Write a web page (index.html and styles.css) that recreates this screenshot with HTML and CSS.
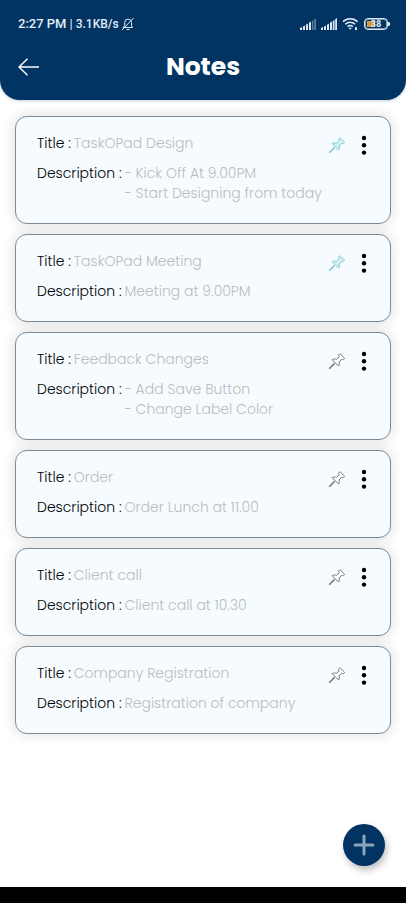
FILE: index.html
```html
<!DOCTYPE html>
<html lang="en">
<head>
<meta charset="utf-8">
<meta name="viewport" content="width=device-width, initial-scale=1">
<title>Notes</title>
<link rel="stylesheet" href="styles.css">
</head>
<body>
<svg class="defs" aria-hidden="true">
  <symbol id="pin" viewBox="0 0 18 18">
    <path stroke-width="1.500" d="M1.200 16.800 6.600 11.400"/>
    <path d="M4.200 7.600c1.500-.8 3-.7 4.200-.3L11.200 4.800c-.7-.9-.6-1.900.1-2.600q.6-.6 1.200 0l3.700 3.600q.6.600 0 1.200c-.7.7-1.700.8-2.600.2L11 10c.5 1.400.4 2.800-.4 4.100z"/>
  </symbol>
  <symbol id="dots" viewBox="0 0 6 20">
    <circle cx="3" cy="3" r="2.200"/><circle cx="3" cy="10.300" r="2.200"/><circle cx="3" cy="17.600" r="2.200"/>
  </symbol>
  <symbol id="signal" viewBox="0 0 16 12">
    <path d="M0 12v-2l2-1v3zM3 12V8.500l2-1V12zM6 12V6.700l2-1.200V12zM9 12V4.800l2-1.300V12z"/>
  </symbol>
</svg>
<header class="header">
  <div class="status">
    <span class="clock">2:27 PM</span><span class="divider">|</span><span class="speed">3.1KB/s</span>
    <svg class="bell" viewBox="0 0 14 14" aria-hidden="true"><path d="M2 10.500h9.500l-1-1.700V5.500a3.400 3.400 0 0 0-6.800 0v3.300zM5.500 12.500h3M1 13 12.500 1"/></svg>
    <div class="indicators">
      <svg class="signal" viewBox="0 0 16 12" aria-hidden="true"><use href="#signal"/><path class="dim" d="M12 12V3l1.500-1v10zM14.200 12V1.500L16 .5V12z"/></svg>
      <svg class="signal" viewBox="0 0 16 12" aria-hidden="true"><use href="#signal"/><path d="M11.800 12V3l1.700-1v10zM14.200 12V1.300L16 0v12z"/></svg>
      <svg class="wifi" viewBox="0 0 17 14" aria-hidden="true"><path class="arc" d="M1 4.800c4-4.100 10.500-4.100 14.500 0M3.300 7.300c2.800-2.800 7-2.800 9.800 0M5.600 9.600c1.500-1.500 3.700-1.500 5.200 0"/><path d="m8.200 12.800-1.600-1.700c.9-.8 2.300-.8 3.200 0zM13 10.200h2v2.800h-2z"/></svg>
      <div class="battery"><span class="charge"></span><span class="level">38</span></div>
    </div>
  </div>
  <div class="appbar">
    <button class="back" type="button" aria-label="Back"><svg viewBox="0 0 22 18" aria-hidden="true"><path d="M21 9H1M9.500 .8 1 9l8.500 8.200"/></svg></button>
    <h1>Notes</h1>
  </div>
</header>
<main class="notes">
  <article class="note">
    <dl><div class="row"><dt>Title :</dt><dd>TaskOPad Design</dd></div><div class="row"><dt>Description :</dt><dd>- Kick Off At 9.00PM<br>- Start Designing from today</dd></div></dl>
    <div class="actions"><button class="pin pinned" type="button" aria-label="Unpin"><svg viewBox="0 0 18 18"><use href="#pin"/></svg></button><button class="more" type="button" aria-label="More"><svg viewBox="0 0 6 20"><use href="#dots"/></svg></button></div>
  </article>
  <article class="note">
    <dl><div class="row"><dt>Title :</dt><dd>TaskOPad Meeting</dd></div><div class="row"><dt>Description :</dt><dd>Meeting at 9.00PM</dd></div></dl>
    <div class="actions"><button class="pin pinned" type="button" aria-label="Unpin"><svg viewBox="0 0 18 18"><use href="#pin"/></svg></button><button class="more" type="button" aria-label="More"><svg viewBox="0 0 6 20"><use href="#dots"/></svg></button></div>
  </article>
  <article class="note">
    <dl><div class="row"><dt>Title :</dt><dd>Feedback Changes</dd></div><div class="row"><dt>Description :</dt><dd>- Add Save Button<br>- Change Label Color</dd></div></dl>
    <div class="actions"><button class="pin" type="button" aria-label="Pin"><svg viewBox="0 0 18 18"><use href="#pin"/></svg></button><button class="more" type="button" aria-label="More"><svg viewBox="0 0 6 20"><use href="#dots"/></svg></button></div>
  </article>
  <article class="note">
    <dl><div class="row"><dt>Title :</dt><dd>Order</dd></div><div class="row"><dt>Description :</dt><dd>Order Lunch at 11.00</dd></div></dl>
    <div class="actions"><button class="pin" type="button" aria-label="Pin"><svg viewBox="0 0 18 18"><use href="#pin"/></svg></button><button class="more" type="button" aria-label="More"><svg viewBox="0 0 6 20"><use href="#dots"/></svg></button></div>
  </article>
  <article class="note">
    <dl><div class="row"><dt>Title :</dt><dd>Client call</dd></div><div class="row"><dt>Description :</dt><dd>Client call at 10.30</dd></div></dl>
    <div class="actions"><button class="pin" type="button" aria-label="Pin"><svg viewBox="0 0 18 18"><use href="#pin"/></svg></button><button class="more" type="button" aria-label="More"><svg viewBox="0 0 6 20"><use href="#dots"/></svg></button></div>
  </article>
  <article class="note">
    <dl><div class="row"><dt>Title :</dt><dd>Company Registration</dd></div><div class="row"><dt>Description :</dt><dd>Registration of company</dd></div></dl>
    <div class="actions"><button class="pin" type="button" aria-label="Pin"><svg viewBox="0 0 18 18"><use href="#pin"/></svg></button><button class="more" type="button" aria-label="More"><svg viewBox="0 0 6 20"><use href="#dots"/></svg></button></div>
  </article>
</main>
<button class="add" type="button" aria-label="Add note"><svg viewBox="0 0 22 22" aria-hidden="true"><path d="M11 2v18M2 11h18"/></svg></button>
<footer class="navbar"></footer>
</body>
</html>
```
FILE: styles.css
```css
* {
  box-sizing: border-box;
}

body {
  margin: 0;
  min-height: 100vh;
  display: flex;
  flex-direction: column;
  background: #fff;
  color: #000;
  font-family: Poppins, Inter, "Liberation Sans", sans-serif;
  font-size: 14px;
  font-weight: 300;
  line-height: 20px;
}

.defs {
  display: none;
}

svg {
  display: block;
}

button {
  padding: 0;
  border: 0;
  background: none;
  cursor: pointer;
}

.header {
  padding: 14px 18px 15px;
  border-radius: 0 0 20px 20px;
  background: #013462;
  color: #fff;
  box-shadow: 0 1px 3px #01346240;
}

.status {
  display: flex;
  align-items: center;
  height: 20px;
  color: #e3edf7;
  font-family: Roboto, "Liberation Sans", sans-serif;
  font-size: 13px;
  font-weight: 500;
}

.divider {
  margin: 0 3px;
  font-weight: 400;
}

.speed {
  font-size: 12px;
}

.bell {
  width: 14px;
  height: 14px;
  margin-left: 2px;
  fill: none;
  stroke: #e3edf7;
}

.indicators {
  display: flex;
  align-items: center;
  gap: 5px;
  margin-left: auto;
}

.signal {
  width: 16px;
  height: 12px;
  fill: #dce8f3;
}

.dim {
  opacity: 0.4;
}

.wifi {
  width: 17px;
  height: 14px;
  fill: #e3edf7;
}

.arc {
  fill: none;
  stroke: #e3edf7;
  stroke-width: 1.5;
}

.battery {
  position: relative;
  display: flex;
  align-items: center;
  justify-content: center;
  width: 24px;
  height: 12px;
  border: 1px solid #dce8f3;
  border-radius: 4px;
  box-shadow: inset 0 0 0 1px #7f9ab2;
}

.battery::after {
  content: "";
  position: absolute;
  right: -3px;
  top: 3px;
  width: 2px;
  height: 4px;
  border-radius: 1px;
  background: #dce8f3;
}

.charge {
  position: absolute;
  left: 2px;
  top: 2px;
  width: 8px;
  height: 6px;
  background: #c79a3c;
}

.level {
  position: relative;
  font-size: 9px;
  font-weight: 700;
  line-height: 10px;
}

.appbar {
  display: grid;
  grid-template-columns: 22px 1fr 22px;
  align-items: center;
  margin-top: 15px;
}

.back svg {
  width: 22px;
  height: 18px;
  fill: none;
  stroke: #fff;
  stroke-width: 1.4;
}

h1 {
  margin: 0;
  font-size: 25px;
  line-height: 36px;
  font-weight: 700;
  text-align: center;
}

.notes {
  display: flex;
  flex-direction: column;
  gap: 10px;
  padding: 16px 15px;
}

.note {
  display: flex;
  justify-content: space-between;
  align-items: flex-start;
  padding: 16px 21px 20px;
  border: 1px solid #7b8b98;
  border-radius: 12px;
  background: #f6fbff;
  box-shadow: 0 0 12px 2px #0000001c;
}

dl {
  display: flex;
  flex-direction: column;
  gap: 10px;
  margin: 0;
}

.row {
  display: flex;
  gap: 3px;
}

dt {
  flex: none;
}

dd {
  margin: 0;
  color: #b9bdc0;
}

.actions {
  display: flex;
  align-items: center;
  gap: 15px;
  padding-top: 2px;
}

.pin svg {
  width: 18px;
  height: 18px;
  fill: #fff;
  stroke: #74787b;
}

.pin.pinned svg {
  stroke: #82c5d1;
  fill: #d8f3f8;
}

.more svg {
  width: 6px;
  height: 20px;
  fill: #000;
}

.more {
  margin-right: 2px;
}

.add {
  position: fixed;
  right: 21px;
  bottom: 37px;
  display: grid;
  place-items: center;
  width: 42px;
  height: 42px;
  border-radius: 50%;
  background: #013462;
  box-shadow: 2px 4px 7px #00000040;
}

.add svg {
  width: 22px;
  height: 22px;
  fill: none;
  stroke: #8ea5b9;
  stroke-width: 3;
  stroke-linecap: round;
}

.navbar {
  height: 16px;
  margin-top: auto;
  background: #000;
}
```
